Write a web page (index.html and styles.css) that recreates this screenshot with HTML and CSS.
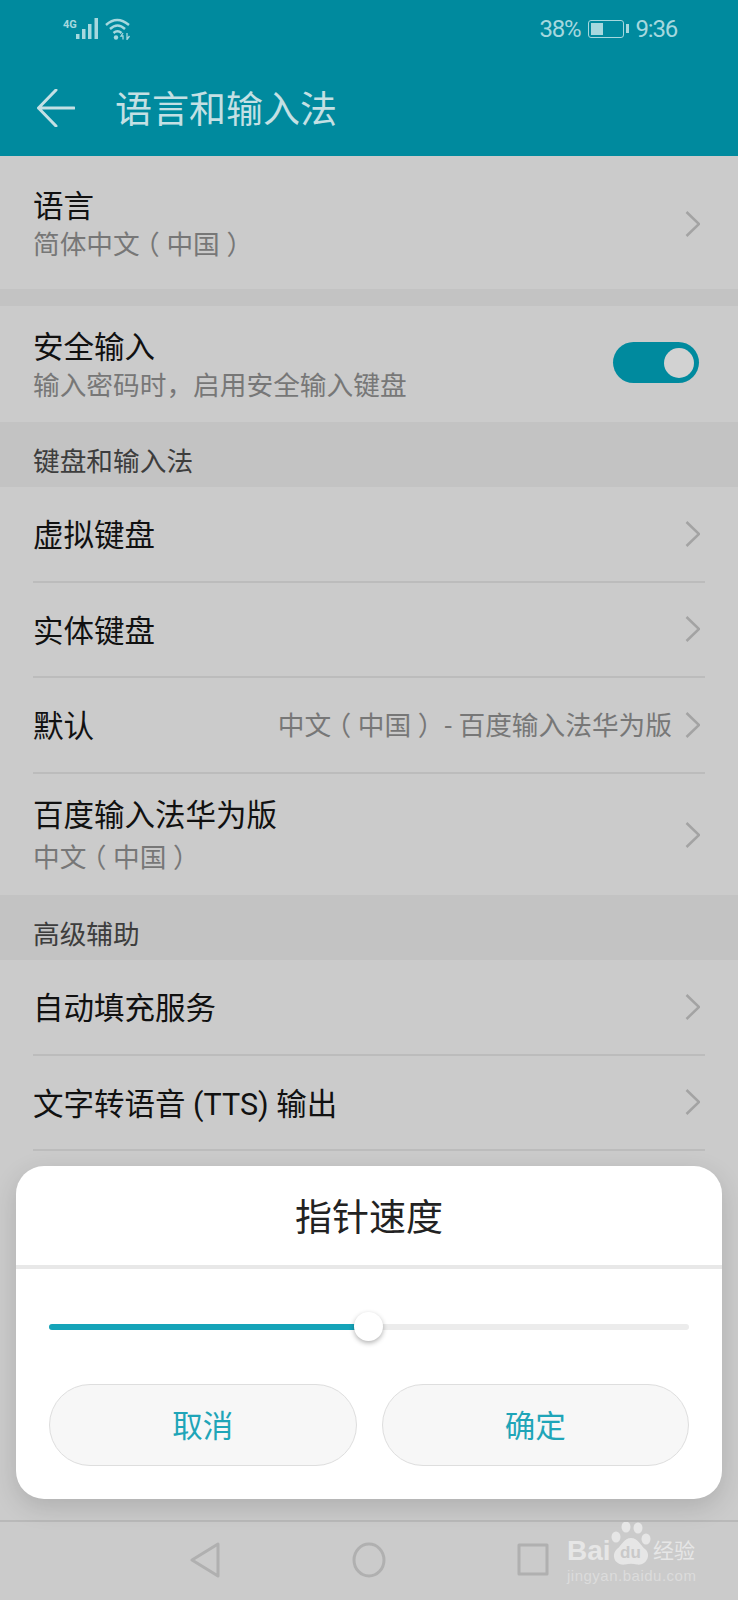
FILE: index.html
```html
<!DOCTYPE html>
<html lang="zh-CN">
<head>
    <meta charset="UTF-8">
    <meta name="viewport" content="width=device-width, initial-scale=1.0">
    <title>语言和输入法</title>
    <link rel="stylesheet" href="styles.css">
</head>
<body>
    <header class="appbar">
        <div class="statusbar">
            <div class="status-left">
                <span class="net">4G</span>
                <svg class="signal" width="23" height="21" viewBox="0 0 23 21">
                    <rect x="0" y="16" width="3.500" height="5"/>
                    <rect x="6" y="11" width="3.500" height="10"/>
                    <rect x="12" y="6" width="3.500" height="15"/>
                    <rect x="18.500" y="0" width="3.500" height="21"/>
                </svg>
                <svg class="wifi" width="26" height="22" viewBox="0 0 26 22" fill="none" stroke="currentColor" stroke-width="2.400">
                    <path d="M1 7 Q12 -3 24 7"/>
                    <path d="M5 11 Q12.500 4 20 11"/>
                    <path d="M8.500 15 Q12.500 11.500 16.500 15"/>
                    <circle cx="11" cy="19.500" r="2.200" fill="currentColor" stroke="none"/>
                    <path d="M18 15 L16 18 H18 V21.500 M22 15 V21.500 L24.500 18" stroke-width="1.300"/>
                </svg>
            </div>
            <div class="status-right">
                <span>38%</span>
                <div class="battery"><div class="battery-level"></div></div>
                <span>9:36</span>
            </div>
        </div>
        <div class="toolbar">
            <svg class="back" width="38" height="38" viewBox="0 0 38 38" fill="none" stroke="currentColor" stroke-width="3" stroke-linecap="round" stroke-linejoin="round">
                <path d="M19 1 L1.500 19 L19 37 M1.500 19 H37"/>
            </svg>
            <h1>语言和输入法</h1>
        </div>
    </header>

    <main class="content">
        <div class="row row-language">
            <div>
                <div class="label">语言</div>
                <div class="sub">简体中文<span class="paren">（</span>中国<span class="paren">）</span></div>
            </div>
            <svg class="chevron" width="15" height="26" viewBox="0 0 15 26"><path d="M1.500 1 L14 13 L1.500 25"/></svg>
        </div>
        <div class="row row-secure">
            <div>
                <div class="label">安全输入</div>
                <div class="sub">输入密码时，启用安全输入键盘</div>
            </div>
            <div class="switch"><div class="switch-knob"></div></div>
        </div>

        <div class="section">键盘和输入法</div>
        <div class="row line">
            <div class="label">虚拟键盘</div>
            <svg class="chevron" width="15" height="26" viewBox="0 0 15 26"><path d="M1.500 1 L14 13 L1.500 25"/></svg>
        </div>
        <div class="row line">
            <div class="label">实体键盘</div>
            <svg class="chevron" width="15" height="26" viewBox="0 0 15 26"><path d="M1.500 1 L14 13 L1.500 25"/></svg>
        </div>
        <div class="row line">
            <div class="label">默认</div>
            <div class="value">中文<span class="paren">（</span>中国<span class="paren">）</span> - 百度输入法华为版</div>
            <svg class="chevron" width="15" height="26" viewBox="0 0 15 26"><path d="M1.500 1 L14 13 L1.500 25"/></svg>
        </div>
        <div class="row row-ime">
            <div>
                <div class="label">百度输入法华为版</div>
                <div class="sub">中文<span class="paren">（</span>中国<span class="paren">）</span></div>
            </div>
            <svg class="chevron" width="15" height="26" viewBox="0 0 15 26"><path d="M1.500 1 L14 13 L1.500 25"/></svg>
        </div>

        <div class="section">高级辅助</div>
        <div class="row line">
            <div class="label">自动填充服务</div>
            <svg class="chevron" width="15" height="26" viewBox="0 0 15 26"><path d="M1.500 1 L14 13 L1.500 25"/></svg>
        </div>
        <div class="row line">
            <div class="label">文字转语音 (TTS) 输出</div>
            <svg class="chevron" width="15" height="26" viewBox="0 0 15 26"><path d="M1.500 1 L14 13 L1.500 25"/></svg>
        </div>
    </main>

    <nav class="navbar">
        <svg width="40" height="36" viewBox="0 0 40 36" fill="none" stroke="currentColor" stroke-width="3" stroke-linejoin="round">
            <path d="M33 2 V34 L7 18 Z"/>
        </svg>
        <svg width="40" height="36" viewBox="0 0 40 36" fill="none" stroke="currentColor" stroke-width="3">
            <ellipse cx="20" cy="18" rx="15" ry="16"/>
        </svg>
        <svg width="40" height="36" viewBox="0 0 40 36" fill="none" stroke="currentColor" stroke-width="3" stroke-linejoin="round">
            <rect x="6" y="3" width="28" height="29"/>
        </svg>
    </nav>

    <div class="dialog">
        <h2>指针速度</h2>
        <div class="slider">
            <div class="track">
                <div class="track-fill" style="width: 50%"></div>
                <div class="thumb"></div>
            </div>
        </div>
        <div class="buttons">
            <button>取消</button>
            <button>确定</button>
        </div>
    </div>

    <div class="watermark">
        <div class="wm-logo">
            <span class="wm-bai">Bai</span>
            <span class="wm-paw">
                <svg width="44" height="44" viewBox="0 0 44 44" fill="currentColor">
                    <ellipse cx="17" cy="5" rx="4.500" ry="5.500"/>
                    <ellipse cx="29" cy="6" rx="4.500" ry="5.500"/>
                    <ellipse cx="7" cy="15" rx="4.500" ry="5.500"/>
                    <ellipse cx="37" cy="17" rx="4.500" ry="5.500"/>
                    <path d="M22 16 C29 16 31 23 36 27 C43 33 37 44 28 42.500 C24 41.500 20 41.500 16 42.500 C7 44 1 34 8 27 C13 23 15 16 22 16 Z"/>
                </svg>
                <span class="wm-du">du</span>
            </span>
            <span class="wm-cn">经验</span>
        </div>
        <div class="wm-url">jingyan.baidu.com</div>
    </div>
</body>
</html>
```

FILE: styles.css
```css
* {
    box-sizing: border-box;
}
body {
    font-family: Roboto, "Noto Sans CJK SC", sans-serif;
    margin: 0;
    width: 738px;
    height: 1600px;
    overflow: hidden;
    display: flex;
    flex-direction: column;
    background-color: #cbcbcb;
    color: #111;
}

/* top bar */
.appbar {
    background-color: #008a9e;
    color: #c4e0e4;
    height: 156px;
}
.statusbar {
    height: 60px;
    display: flex;
    justify-content: space-between;
    align-items: flex-start;
    padding: 14px 61px 0 63px;
    color: #a6d8de;
}
.status-left {
    display: flex;
    align-items: flex-start;
}
.net {
    font-size: 11px;
    font-weight: 700;
    line-height: 14px;
    margin: 4px 1px 0 0;
    width: 12px;
}
.signal {
    fill: currentColor;
    margin-top: 4px;
    margin-right: 6px;
}
.wifi {
    margin-top: 4px;
}
.status-right {
    display: flex;
    align-items: center;
    font-size: 24px;
    line-height: 30px;
    letter-spacing: -1.200px;
}
.battery {
    position: relative;
    width: 36px;
    height: 18px;
    margin: 0 12px 0 7px;
    border: 1.500px solid currentColor;
    border-radius: 3px;
    padding: 2px;
}
.battery::after {
    content: "";
    position: absolute;
    right: -6px;
    top: 3px;
    width: 3px;
    height: 9px;
    background-color: currentColor;
}
.battery-level {
    width: 12px;
    height: 100%;
    background-color: currentColor;
}
.toolbar {
    height: 96px;
    display: flex;
    align-items: center;
    padding-left: 37px;
}
.toolbar h1 {
    font-size: 37px;
    font-weight: 400;
    line-height: 44px;
    margin: 6px 0 0 40px;
}

/* settings list */
.content {
    flex: 1;
}
.row {
    display: flex;
    align-items: center;
    justify-content: space-between;
    margin: 0 33px;
    padding: 4px 5px 0 0;
}
.row-language {
    height: 150px;
    margin: 0;
    padding: 7px 38px 0 33px;
    border-bottom: 17px solid #c3c3c3;
}
.row-secure {
    height: 116px;
    padding: 6px 6px 0 0;
}
.row-ime {
    height: 121.500px;
    padding-top: 5px;
}
.row-ime .label {
    margin-bottom: 4px;
}
.line {
    height: 95.500px;
    border-bottom: 2px solid #bcbcbc;
}
.label {
    font-size: 30.500px;
    line-height: 39px;
    white-space: nowrap;
}
.sub,
.value {
    font-size: 26.700px;
    line-height: 39px;
    color: #777;
    white-space: nowrap;
}
.value {
    margin-left: auto;
    margin-right: 13px;
}
/* half-width bracket glyph with even room on both sides */
.paren {
    font-feature-settings: "halt";
    margin: 0 0.25em;
}
.chevron {
    flex-shrink: 0;
    margin-bottom: 4px;
    fill: none;
    stroke: #a3a3a3;
    stroke-width: 2.500px;
}
.section {
    height: 65px;
    background-color: #c3c3c3;
    padding: 21px 33px 0;
    font-size: 26.700px;
    line-height: 39px;
    color: #3d3d3d;
}
.switch {
    width: 86px;
    height: 41px;
    margin-bottom: 9px;
    border-radius: 21px;
    background-color: #008a9e;
    padding: 6px 5px;
    display: flex;
    justify-content: flex-end;
}
.switch-knob {
    width: 30px;
    height: 30px;
    border-radius: 50%;
    background-color: #d2d2d2;
}

/* nav bar */
.navbar {
    height: 80px;
    border-top: 2px solid #b9b9b9;
    display: flex;
    justify-content: center;
    align-items: center;
    gap: 124px;
    color: #b0b0b0;
    padding-bottom: 2px;
}

/* dialog over the list */
.dialog {
    position: absolute;
    left: 16px;
    top: 1166px;
    width: 706px;
    height: 333px;
    background-color: #fff;
    border-radius: 28px;
    box-shadow: 0 8px 26px rgba(0, 0, 0, 0.14);
    padding: 0 33px;
}
.dialog h2 {
    height: 103px;
    margin: 0 -33px;
    border-bottom: 4px solid #e8e8e8;
    font-size: 37px;
    font-weight: 400;
    line-height: 106px;
    text-align: center;
    color: #222;
}
.slider {
    height: 115px;
    display: flex;
    align-items: center;
}
.track {
    position: relative;
    width: 100%;
    height: 6px;
    border-radius: 3px;
    background-color: #ececec;
}
.track-fill {
    height: 100%;
    border-radius: 3px;
    background-color: #15a4b9;
}
.thumb {
    position: absolute;
    left: 50%;
    top: 50%;
    width: 29px;
    height: 29px;
    margin: -15px 0 0 -15px;
    border-radius: 50%;
    background-color: #fff;
    box-shadow: 0 2px 5px rgba(0, 0, 0, 0.3);
}
.buttons {
    display: flex;
    gap: 25px;
}
.buttons button {
    flex: 1;
    height: 82px;
    border: 1px solid #dedede;
    border-radius: 41px;
    background-color: #f7f7f7;
    color: #1fa5b8;
    font-family: inherit;
    font-size: 30.500px;
    line-height: 36px;
    padding: 4px 0 0;
}

/* baidu mark in the corner */
.watermark {
    position: absolute;
    left: 567px;
    top: 1522px;
    width: 134px;
    color: #e6e6e6;
}
.wm-logo {
    display: flex;
    align-items: flex-end;
    height: 44px;
}
.wm-bai {
    font-family: "Liberation Sans", sans-serif;
    font-size: 28px;
    font-weight: 700;
    line-height: 24px;
    width: 42px;
    margin-bottom: 3px;
}
.wm-paw {
    position: relative;
    width: 44px;
    height: 44px;
}
.wm-du {
    position: absolute;
    left: 11px;
    bottom: 3px;
    font-family: "Liberation Sans", sans-serif;
    font-size: 17px;
    font-weight: 700;
    line-height: 20px;
    color: #c9c9c9;
}
.wm-cn {
    font-size: 21px;
    line-height: 26px;
    margin-bottom: 2px;
    white-space: nowrap;
}
.wm-url {
    font-family: "Liberation Sans", sans-serif;
    font-size: 15px;
    line-height: 18px;
    letter-spacing: 0.500px;
    margin-top: 1px;
    color: #dcdcdc;
    white-space: nowrap;
}
```
